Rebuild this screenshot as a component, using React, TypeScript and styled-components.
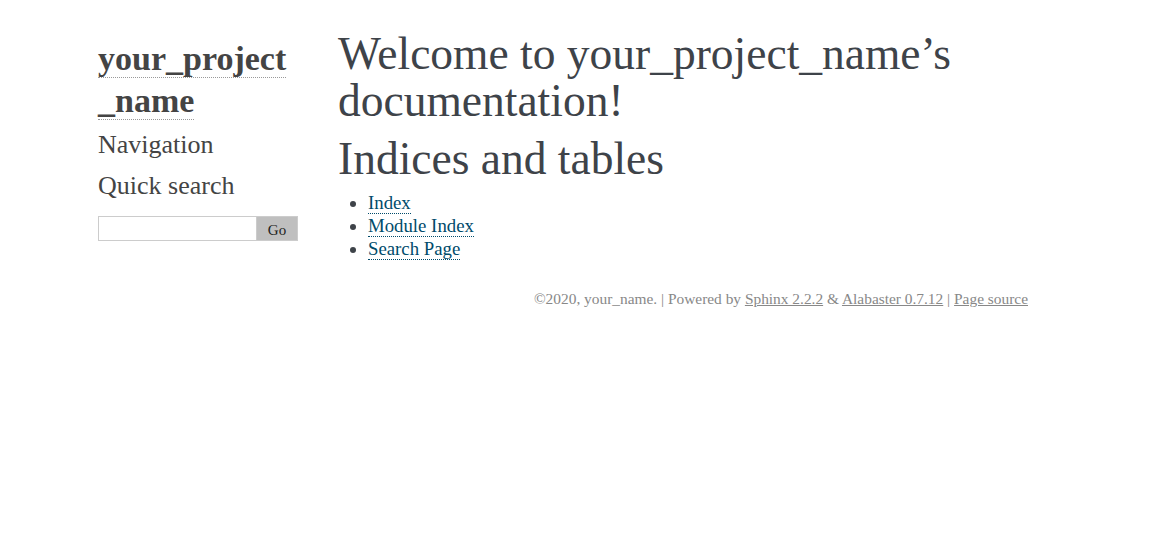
import React from "react";
import styled, { createGlobalStyle } from "styled-components";

const Global = createGlobalStyle`
  html, body { margin: 0; padding: 0; background: #fff; }
  body {
    font-family: "Liberation Serif", "DejaVu Serif", serif;
    font-size: 19px;
    color: #3e4349;
  }
`;

const Document = styled.div`
  width: 940px;
  margin: 30px 0 0 88px;
  display: flex;
  align-items: flex-start;
`;

const Sidebar = styled.div`
  width: 220px;
  box-sizing: border-box;
  padding: 8px 10px 18px 10px;
  line-height: 1.5;
`;

const Logo = styled.h1`
  margin: 0 0 5px 0;
  font-size: 34px;
  line-height: 42px;
  font-weight: bold;
  color: #444;
`;

const LogoLink = styled.a`
  color: #444;
  text-decoration: none;
  border-bottom: 1px dotted #999;
`;

const SideHeading = styled.h3`
  margin: 0 0 5px 0;
  font-size: 26px;
  line-height: 36px;
  font-weight: normal;
  color: #444;
`;

const SearchForm = styled.form`
  display: flex;
  margin: 12px 0 0 0;
  width: 200px;
`;

const SearchInput = styled.input`
  width: 159px;
  height: 25px;
  box-sizing: border-box;
  border: 1px solid #ccc;
  margin: 0;
  padding: 2px 4px;
  font-family: "Liberation Serif", serif;
  font-size: 15px;
`;

const GoButton = styled.button`
  width: 41px;
  height: 25px;
  box-sizing: border-box;
  margin: 0;
  border: 1px solid #ccc;
  border-left: none;
  background: #bfbfbf;
  color: #222;
  font-family: "Liberation Serif", serif;
  font-size: 15px;
  padding: 3px 0 0 0;
`;

const Body = styled.div`
  flex: 1;
  padding: 0 30px;
`;

const Title = styled.h1`
  margin: 0;
  font-size: 45.5px;
  line-height: 47px;
  font-weight: normal;
`;

const Subtitle = styled.h2`
  margin: 11px 0 0 0;
  font-size: 45.5px;
  line-height: 47px;
  font-weight: normal;
`;

const List = styled.ul`
  margin: 9px 0 10px 30px;
  padding: 0;
  font-size: 18.8px;
  line-height: 23px;
`;

const Item = styled.li``;

const Link = styled.a`
  color: #004b6b;
  text-decoration: none;
  border-bottom: 1px dotted #004b6b;
`;

const Footer = styled.div`
  width: 940px;
  margin: 19px 0 30px 88px;
  font-size: 15.4px;
  line-height: 20px;
  color: #888;
  text-align: right;
`;

const FooterLink = styled.a`
  color: #888;
  text-decoration: underline;
`;

export default function App() {
  return (
    <>
      <Global />
      <Document>
        <Sidebar>
          <Logo>
            <LogoLink href="#">
              your_project<wbr />_name
            </LogoLink>
          </Logo>
          <SideHeading>Navigation</SideHeading>
          <SideHeading>Quick search</SideHeading>
          <SearchForm onSubmit={(e) => e.preventDefault()}>
            <SearchInput type="text" />
            <GoButton type="submit">Go</GoButton>
          </SearchForm>
        </Sidebar>
        <Body>
          <Title>Welcome to your_project_name’s documentation!</Title>
          <Subtitle>Indices and tables</Subtitle>
          <List>
            <Item>
              <Link href="#">Index</Link>
            </Item>
            <Item>
              <Link href="#">Module Index</Link>
            </Item>
            <Item>
              <Link href="#">Search Page</Link>
            </Item>
          </List>
        </Body>
      </Document>
      <Footer>
        ©2020, your_name. | Powered by <FooterLink href="#">Sphinx 2.2.2</FooterLink>{" "}
        &amp; <FooterLink href="#">Alabaster 0.7.12</FooterLink> |{" "}
        <FooterLink href="#">Page source</FooterLink>
      </Footer>
    </>
  );
}
